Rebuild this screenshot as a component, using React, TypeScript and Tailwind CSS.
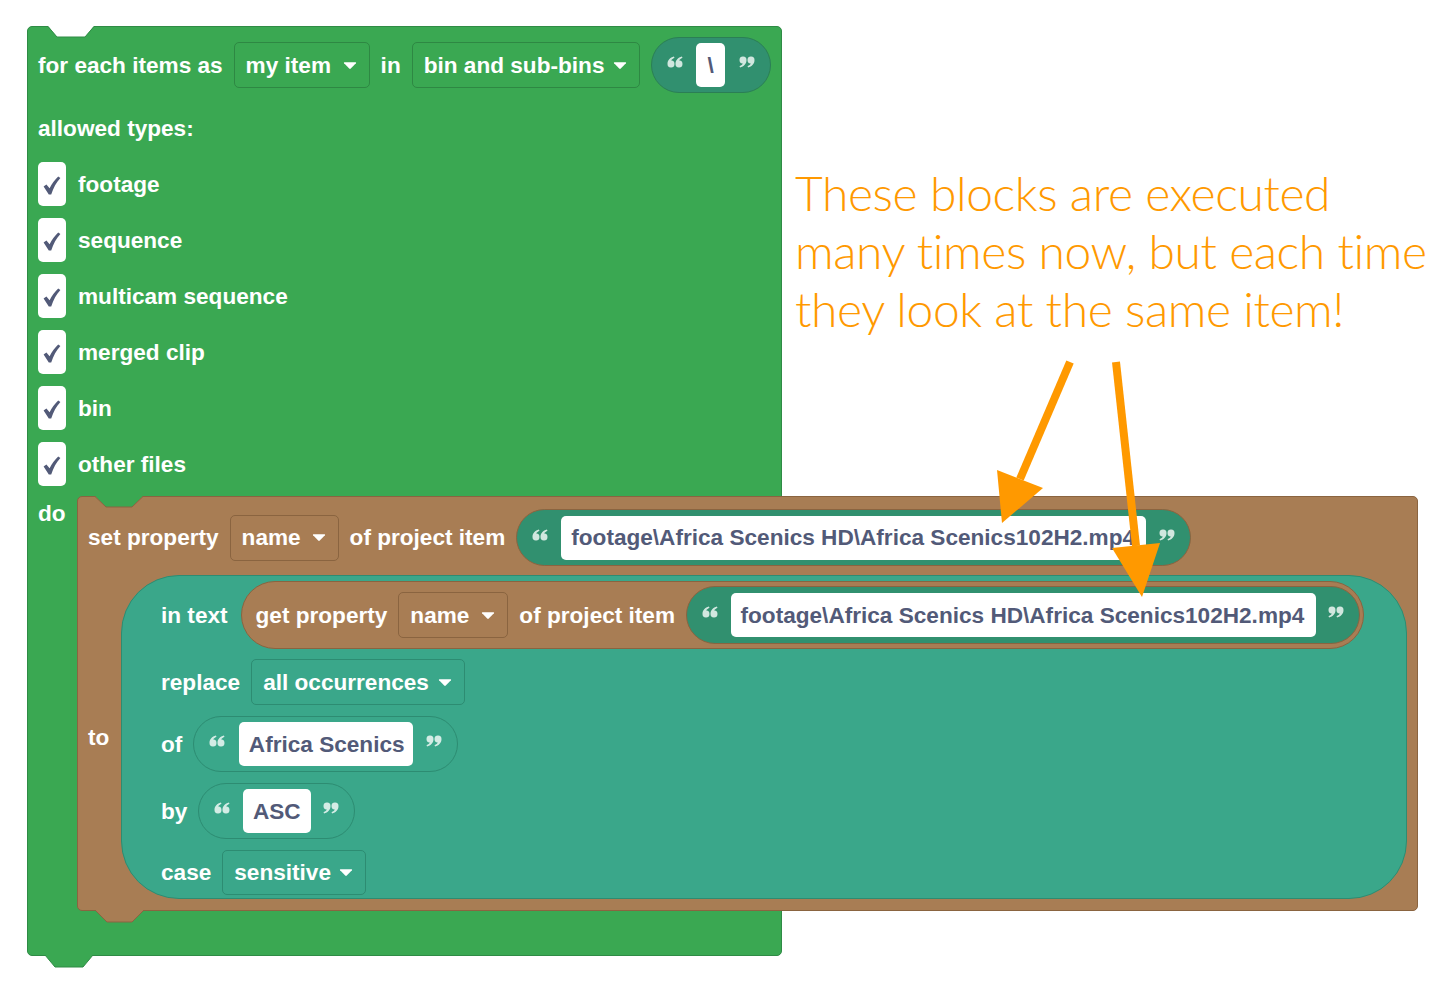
import React from 'react';

const TYPES = ['footage', 'sequence', 'multicam sequence', 'merged clip', 'bin', 'other files'];

function Arrow() {
  return (
    <svg width="14" height="9" viewBox="0 0 14 9" className="shrink-0">
      <path d="M1.5 1.2 H12.5 Q13.6 1.2 12.9 2.2 L7.8 7.6 Q7 8.4 6.2 7.6 L1.1 2.2 Q0.4 1.2 1.5 1.2 Z" fill="white" />
    </svg>
  );
}

function Label({ children }: { children: React.ReactNode }) {
  return <span className="translate-y-[1px] whitespace-nowrap text-[22.6px] font-bold leading-none text-white">{children}</span>;
}

function Dropdown({ label, className }: { label: string; className: string }) {
  return (
    <div className={`flex items-center justify-between rounded-[5px] border pl-[11px] pr-[12px] ${className}`}>
      <Label>{label}</Label>
      <Arrow />
    </div>
  );
}

// comma-shaped quote marks, like the blockly images
const GLYPH = 'M0 7.5 C0 3.6 2.6 1.1 6.4 0 L7 1.3 C5.1 2.2 4 3.2 3.8 4.1 A3.5 3.5 0 1 1 0 7.5 Z';

function Quote({ open }: { open?: boolean }) {
  return (
    <svg width="16" height="12" viewBox="0 0 16 12" className={`shrink-0 ${open ? '-translate-y-[3px]' : '-translate-y-[3px] rotate-180'}`}>
      <path d={GLYPH} transform="translate(0.5 0.5)" fill="white" fillOpacity="0.78" />
      <path d={GLYPH} transform="translate(8.5 0.5)" fill="white" fillOpacity="0.78" />
    </svg>
  );
}

function TextPill({ value, className, box }: { value: string; className: string; box: string }) {
  return (
    <div className={`flex items-center justify-between rounded-full border px-[15px] ${className}`}>
      <Quote open />
      <div className={`flex h-[44px] items-center rounded-[5px] bg-white px-[10px] ${box}`}>
        <span className="translate-y-[1px] whitespace-nowrap text-[22.6px] font-bold leading-none text-[#525a78]">{value}</span>
      </div>
      <Quote />
    </div>
  );
}

function Checkbox() {
  return (
    <div className="flex h-[44px] w-[28px] items-center justify-center rounded-[5px] bg-white">
      <svg width="18" height="19" viewBox="0 0 18 19" className="translate-y-[1px]">
        <path d="M0.6 10.4 L3.4 8.4 L6.6 12.2 C8.8 7.8 11.6 3.8 15.2 0.4 L17.4 2 C13.4 6.4 10.4 11.8 8.2 18.4 L5.8 18.4 Z" fill="#525a78" />
      </svg>
    </div>
  );
}

export default function App() {
  return (
    <div className="relative h-[994px] w-[1451px] overflow-hidden bg-white pl-[27px] pt-[26px] font-['Liberation_Sans',Arial,sans-serif]">
      {/* for each block */}
      <div className="relative w-[755px] rounded-[5px] border border-[#2f8b45] bg-[#3aa852]">
        <svg className="absolute -top-px left-[20px]" width="46" height="12" viewBox="0 0 46 12">
          <polygon points="0,0 9,11 37,11 46,0" fill="white" />
          <polyline points="0,0.5 9,11 37,11 46,0.5" fill="none" stroke="#2f8b45" />
        </svg>
        <svg className="absolute left-[17px] top-full" width="50" height="13" viewBox="0 0 50 13">
          <polygon points="0,0 10,12 38,12 48,0" fill="#3aa852" />
          <polyline points="0,0 10,12 38,12 48,0" fill="none" stroke="#2f8b45" />
        </svg>

        <div className="px-[10px] pb-[4px] pt-[10px]">
          <div className="flex h-[56px] items-center gap-[11px]">
            <Label>for each items as</Label>
            <Dropdown label="my item" className="h-[46px] w-[136px] border-[#2e8843]" />
            <Label>in</Label>
            <Dropdown label="bin and sub-bins" className="h-[46px] w-[228px] border-[#2e8843]" />
            <TextPill value="\" className="h-[56px] w-[120px] border-[#2b7f55] bg-[#31906f]" box="w-[29px] justify-center" />
          </div>
          <div className="mt-[7px] flex h-[56px] items-center">
            <Label>allowed types:</Label>
          </div>
          {TYPES.map((t) => (
            <div key={t} className="flex h-[56px] items-center gap-[12px]">
              <Checkbox />
              <Label>{t}</Label>
            </div>
          ))}
        </div>

        <div className="flex">
          <div className="w-[49px] shrink-0 pl-[10px] pt-[7px]">
            <Label>do</Label>
          </div>

          {/* set property block */}
          <div className="relative w-[1341px] shrink-0 rounded-[5px] border border-[#8a6440] bg-[#a87d54] pb-[11px] pl-[10px] pr-[10px] pt-[12px]">
            <svg className="absolute -top-px left-[17px]" width="48" height="12" viewBox="0 0 48 12">
              <polygon points="0,0 11,11 37,11 48,0" fill="#3aa852" />
              <polyline points="0,0.5 11,11 37,11 48,0.5" fill="none" stroke="#8a6440" />
            </svg>
            <svg className="absolute left-[17px] top-full" width="50" height="13" viewBox="0 0 50 13">
              <polygon points="0,0 12,12 37,12 49,0" fill="#a87d54" />
              <polyline points="0,0 12,12 37,12 49,0" fill="none" stroke="#8a6440" />
            </svg>

            <div className="flex h-[57px] items-center gap-[11px]">
              <Label>set property</Label>
              <Dropdown label="name" className="h-[46px] w-[109px] border-[#8a6440]" />
              <Label>of project item</Label>
              <TextPill
                value="footage\Africa Scenics HD\Africa Scenics102H2.mp4"
                className="h-[57px] w-[675px] border-[#8a6440] bg-[#31906f]"
                box="w-[585px]"
              />
            </div>

            <div className="mt-[9px] flex">
              <div className="flex w-[33px] shrink-0 items-center">
                <Label>to</Label>
              </div>

              {/* replace text block */}
              <div className="h-[324px] w-[1286px] shrink-0 rounded-[58px] border border-[#2d8c72] bg-[#3aa78a] pl-[39px] pt-[5px]">
                <div className="flex h-[68px] items-center gap-[13px]">
                  <Label>in text</Label>
                  <div className="flex h-[68px] w-[1123px] shrink-0 items-center gap-[11px] rounded-full border border-[#8a6440] bg-[#a87d54] pl-[14px]">
                    <Label>get property</Label>
                    <Dropdown label="name" className="h-[46px] w-[110px] border-[#8a6440]" />
                    <Label>of project item</Label>
                    <TextPill
                      value="footage\Africa Scenics HD\Africa Scenics102H2.mp4"
                      className="h-[58px] w-[674px] border-[#8a6440] bg-[#31906f]"
                      box="w-[585px]"
                    />
                  </div>
                </div>
                <div className="mt-[10px] flex h-[46px] items-center gap-[11px]">
                  <Label>replace</Label>
                  <Dropdown label="all occurrences" className="h-[46px] w-[214px] border-[#2d8c72]" />
                </div>
                <div className="mt-[11px] flex h-[56px] items-center gap-[11px]">
                  <Label>of</Label>
                  <TextPill value="Africa Scenics" className="h-[56px] w-[265px] border-[#2d8c72] bg-[#3aa78a]" box="w-[174px]" />
                </div>
                <div className="mt-[11px] flex h-[56px] items-center gap-[11px]">
                  <Label>by</Label>
                  <TextPill value="ASC" className="h-[56px] w-[157px] border-[#2d8c72] bg-[#3aa78a]" box="w-[68px]" />
                </div>
                <div className="mt-[11px] flex h-[45px] items-center gap-[11px]">
                  <Label>case</Label>
                  <Dropdown label="sensitive" className="h-[45px] w-[144px] border-[#2d8c72]" />
                </div>
              </div>
            </div>
          </div>
        </div>

        <div className="h-[44px]" />
      </div>

      {/* annotation */}
      <div className="absolute left-[795px] top-[164px] font-['Lato',sans-serif] text-[48px] font-light leading-[58px] tracking-[-0.4px] text-[#ff9900]">
        <div>These blocks are executed</div>
        <div>many times now, but each time</div>
        <div>they look at the same item!</div>
      </div>

      <svg className="pointer-events-none absolute inset-0" width="1451" height="994" viewBox="0 0 1451 994">
        <line x1="1070" y1="362" x2="1020" y2="479" stroke="#ff9900" strokeWidth="8" />
        <polygon points="997,470 1043,488 1002,523" fill="#ff9900" />
        <line x1="1116" y1="362" x2="1136" y2="546" stroke="#ff9900" strokeWidth="8" />
        <polygon points="1112,548 1160,543 1142,597" fill="#ff9900" />
      </svg>
    </div>
  );
}
